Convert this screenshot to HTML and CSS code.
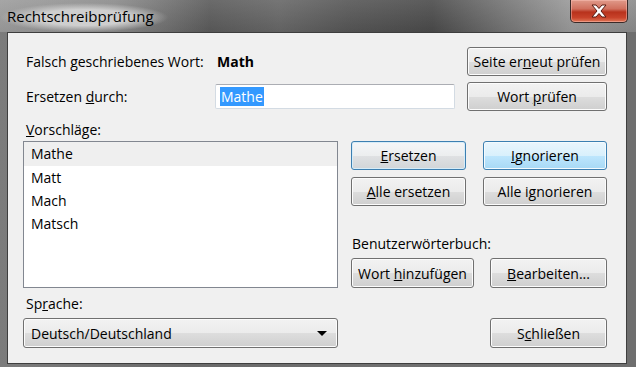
FILE: index.html
```html
<!DOCTYPE html>
<html lang="de">
<head>
  <meta charset="UTF-8">
  <title>Rechtschreibprüfung</title>
  <link rel="stylesheet" href="styles.css">
</head>
<body>
  <div class="window">
    <!-- Titelleiste -->
    <div class="titlebar">
      <span class="title">Rechtschreibprüfung</span>
      <button class="close">
        <svg width="20" height="14" viewBox="0 0 20 14">
          <path d="M3 1 L7 1 L10 4.5 L13 1 L17 1 L12 7 L17 13 L13 13 L10 9.5 L7 13 L3 13 L8 7 Z" fill="#ffffff" stroke="#5a1a10" stroke-width="1"/>
        </svg>
      </button>
    </div>

    <!-- Inhalt -->
    <div class="client">
      <div class="row row-first">
        <span class="label label-wide">Falsch geschriebenes Wort:</span>
        <span class="word">Math</span>
        <button class="btn btn-wide">Seite er<u>n</u>eut prüfen</button>
      </div>

      <div class="row row-second">
        <span class="label label-input">Ersetzen <u>d</u>urch:</span>
        <div class="input"><span class="selected">Mathe</span></div>
        <button class="btn btn-wide">Wort <u>p</u>rüfen</button>
      </div>

      <div class="caption"><u>V</u>orschläge:</div>

      <div class="main">
        <ul class="listbox">
          <li class="current">Mathe</li>
          <li>Matt</li>
          <li>Mach</li>
          <li>Matsch</li>
        </ul>

        <div class="actions">
          <div class="btn-row">
            <button class="btn btn-default btn-a"><u>E</u>rsetzen</button>
            <button class="btn btn-hot btn-b"><u>I</u>gnorieren</button>
          </div>
          <div class="btn-row">
            <button class="btn btn-a"><u>A</u>lle ersetzen</button>
            <button class="btn btn-b">Alle i<u>g</u>norieren</button>
          </div>
          <div class="dict-label">Benutzerwörterbuch:</div>
          <div class="btn-row btn-row-last">
            <button class="btn btn-c">Wort <u>h</u>inzufügen</button>
            <button class="btn btn-d"><u>B</u>earbeiten...</button>
          </div>
        </div>
      </div>

      <div class="caption caption-lang">Sp<u>r</u>ache:</div>

      <div class="row row-bottom">
        <div class="combo">
          <span>Deutsch/Deutschland</span>
          <span class="arrow"></span>
        </div>
        <button class="btn btn-d">S<u>c</u>hließen</button>
      </div>
    </div>
  </div>
</body>
</html>
```

FILE: styles.css
```css
body {
  margin: 0;
  padding: 0;
  font-family: "Open Sans", "Noto Sans", sans-serif;
  font-size: 14px;
  color: #000000;
}

.window {
  width: 636px;
  height: 367px;
  display: flex;
  flex-direction: column;
  background: linear-gradient(to right, #7c7c7c 0%, #6a6a6a 30%, #707070 60%, #6e6e6e 100%);
  overflow: hidden;
}

/* Titelleiste */
.titlebar {
  height: 32px;
  display: flex;
  align-items: flex-start;
  justify-content: space-between;
  padding: 0 8px 0 0;
  background:
    linear-gradient(to bottom, rgba(255, 255, 255, 0.1), rgba(0, 0, 0, 0.05)),
    linear-gradient(to right, #9c9c9c 0%, #8a8a8a 18%, #5a5a5a 33%, #666666 44%, #555555 55%, #4a4a4a 68%, #767676 80%, #9a9a9a 90%, #8a8a8a 100%);
}

.titlebar .title {
  margin-top: 3px;
  padding: 3px 14px 6px 7px;
  font-size: 15px;
  color: #000000;
  background: radial-gradient(ellipse closest-side, rgba(210, 210, 210, 0.95) 55%, rgba(190, 190, 190, 0) 100%);
}

.titlebar .close {
  width: 58px;
  height: 23px;
  padding: 0;
  border: 1px solid #3a2a28;
  border-top: none;
  border-radius: 0 0 5px 5px;
  background: linear-gradient(to bottom, #e09a8a 0%, #d0705e 40%, #b8321c 55%, #c8432a 80%, #e07858 100%);
  box-shadow: inset 0 0 0 1px rgba(255, 200, 190, 0.45);
  display: flex;
  align-items: center;
  justify-content: center;
}

/* Inhalt */
.client {
  flex: 1;
  margin: 0 9px 3px 7px;
  border: 1px solid #3e3e3e;
  background-color: #f0f0f0;
  padding: 13px 19px 0 15px;
}

.row {
  display: flex;
  align-items: center;
}

.row-first {
  height: 30px;
}

.row-second {
  height: 29px;
  margin-top: 6px;
}

.label {
  padding-left: 3px;
}

.label-wide {
  width: 191px;
}

.label-input {
  width: 189px;
}

.word {
  font-weight: 700;
}

.input {
  width: 240px;
  height: 25px;
  box-sizing: border-box;
  border: 1px solid #d3dbe3;
  border-top-color: #abadb3;
  border-radius: 2px;
  background-color: #ffffff;
  display: flex;
  align-items: center;
  padding-left: 4px;
}

.input .selected {
  background-color: #3399ff;
  color: #ffffff;
  line-height: 19px;
  padding: 0 1px;
}

.caption {
  margin-top: 8px;
  height: 22px;
  line-height: 22px;
  padding-left: 3px;
}

.main {
  display: flex;
}

.listbox {
  list-style: none;
  margin: 0;
  padding: 0;
  width: 315px;
  height: 147px;
  box-sizing: border-box;
  border: 1px solid #828790;
  background-color: #ffffff;
}

.listbox li {
  height: 23px;
  line-height: 23px;
  padding-left: 7px;
}

.listbox li.current {
  background-color: #efefef;
  height: 24px;
  line-height: 24px;
}

.actions {
  margin-left: 13px;
  height: 147px;
  display: flex;
  flex-direction: column;
}

.btn-row {
  display: flex;
  justify-content: space-between;
  margin-bottom: 7px;
}

.btn-row-last {
  margin-bottom: 0;
}

.dict-label {
  margin-top: 20px;
  height: 22px;
  line-height: 22px;
  padding-left: 1px;
  margin-bottom: 3px;
}

/* Buttons */
.btn {
  font-family: "Open Sans", "Noto Sans", sans-serif;
  font-size: 14px;
  color: #000000;
  height: 29px;
  padding: 0;
  border: 1px solid #707070;
  border-radius: 3px;
  background: linear-gradient(to bottom, #f2f2f2 0%, #ebebeb 50%, #dddddd 51%, #cfcfcf 100%);
  box-shadow: inset 0 0 0 1px #fcfcfc;
  text-align: center;
}

.btn-wide {
  width: 140px;
  margin-left: auto;
}

.btn-a {
  width: 115px;
}

.btn-b {
  width: 124px;
  margin-left: 17px;
}

.btn-c {
  width: 123px;
  height: 30px;
}

.btn-d {
  width: 117px;
  height: 30px;
  margin-left: 16px;
}

.btn-default {
  border-color: #3c7fb1;
  box-shadow: inset 0 0 0 1px #d6ecf8;
  background: linear-gradient(to bottom, #f4f6f8 0%, #eceeef 50%, #dfe1e3 51%, #d2d5d8 100%);
}

.btn-hot {
  border-color: #3c7fb1;
  box-shadow: inset 0 0 0 1px #f4fbfe;
  background: linear-gradient(to bottom, #eaf6fd 0%, #d9f0fc 50%, #bee6fd 51%, #a7d9f5 100%);
}

.caption-lang {
  margin-top: 6px;
  height: 20px;
  line-height: 20px;
}

.row-bottom {
  margin-top: 4px;
  justify-content: space-between;
}

.combo {
  width: 315px;
  height: 30px;
  box-sizing: border-box;
  border: 1px solid #707070;
  border-radius: 3px;
  background: linear-gradient(to bottom, #f2f2f2 0%, #ebebeb 50%, #dddddd 51%, #cfcfcf 100%);
  box-shadow: inset 0 0 0 1px #fcfcfc;
  display: flex;
  align-items: center;
  justify-content: space-between;
  padding: 0 10px 0 7px;
}

.combo .arrow {
  width: 0;
  height: 0;
  border-left: 5px solid transparent;
  border-right: 5px solid transparent;
  border-top: 5px solid #000000;
}
```
